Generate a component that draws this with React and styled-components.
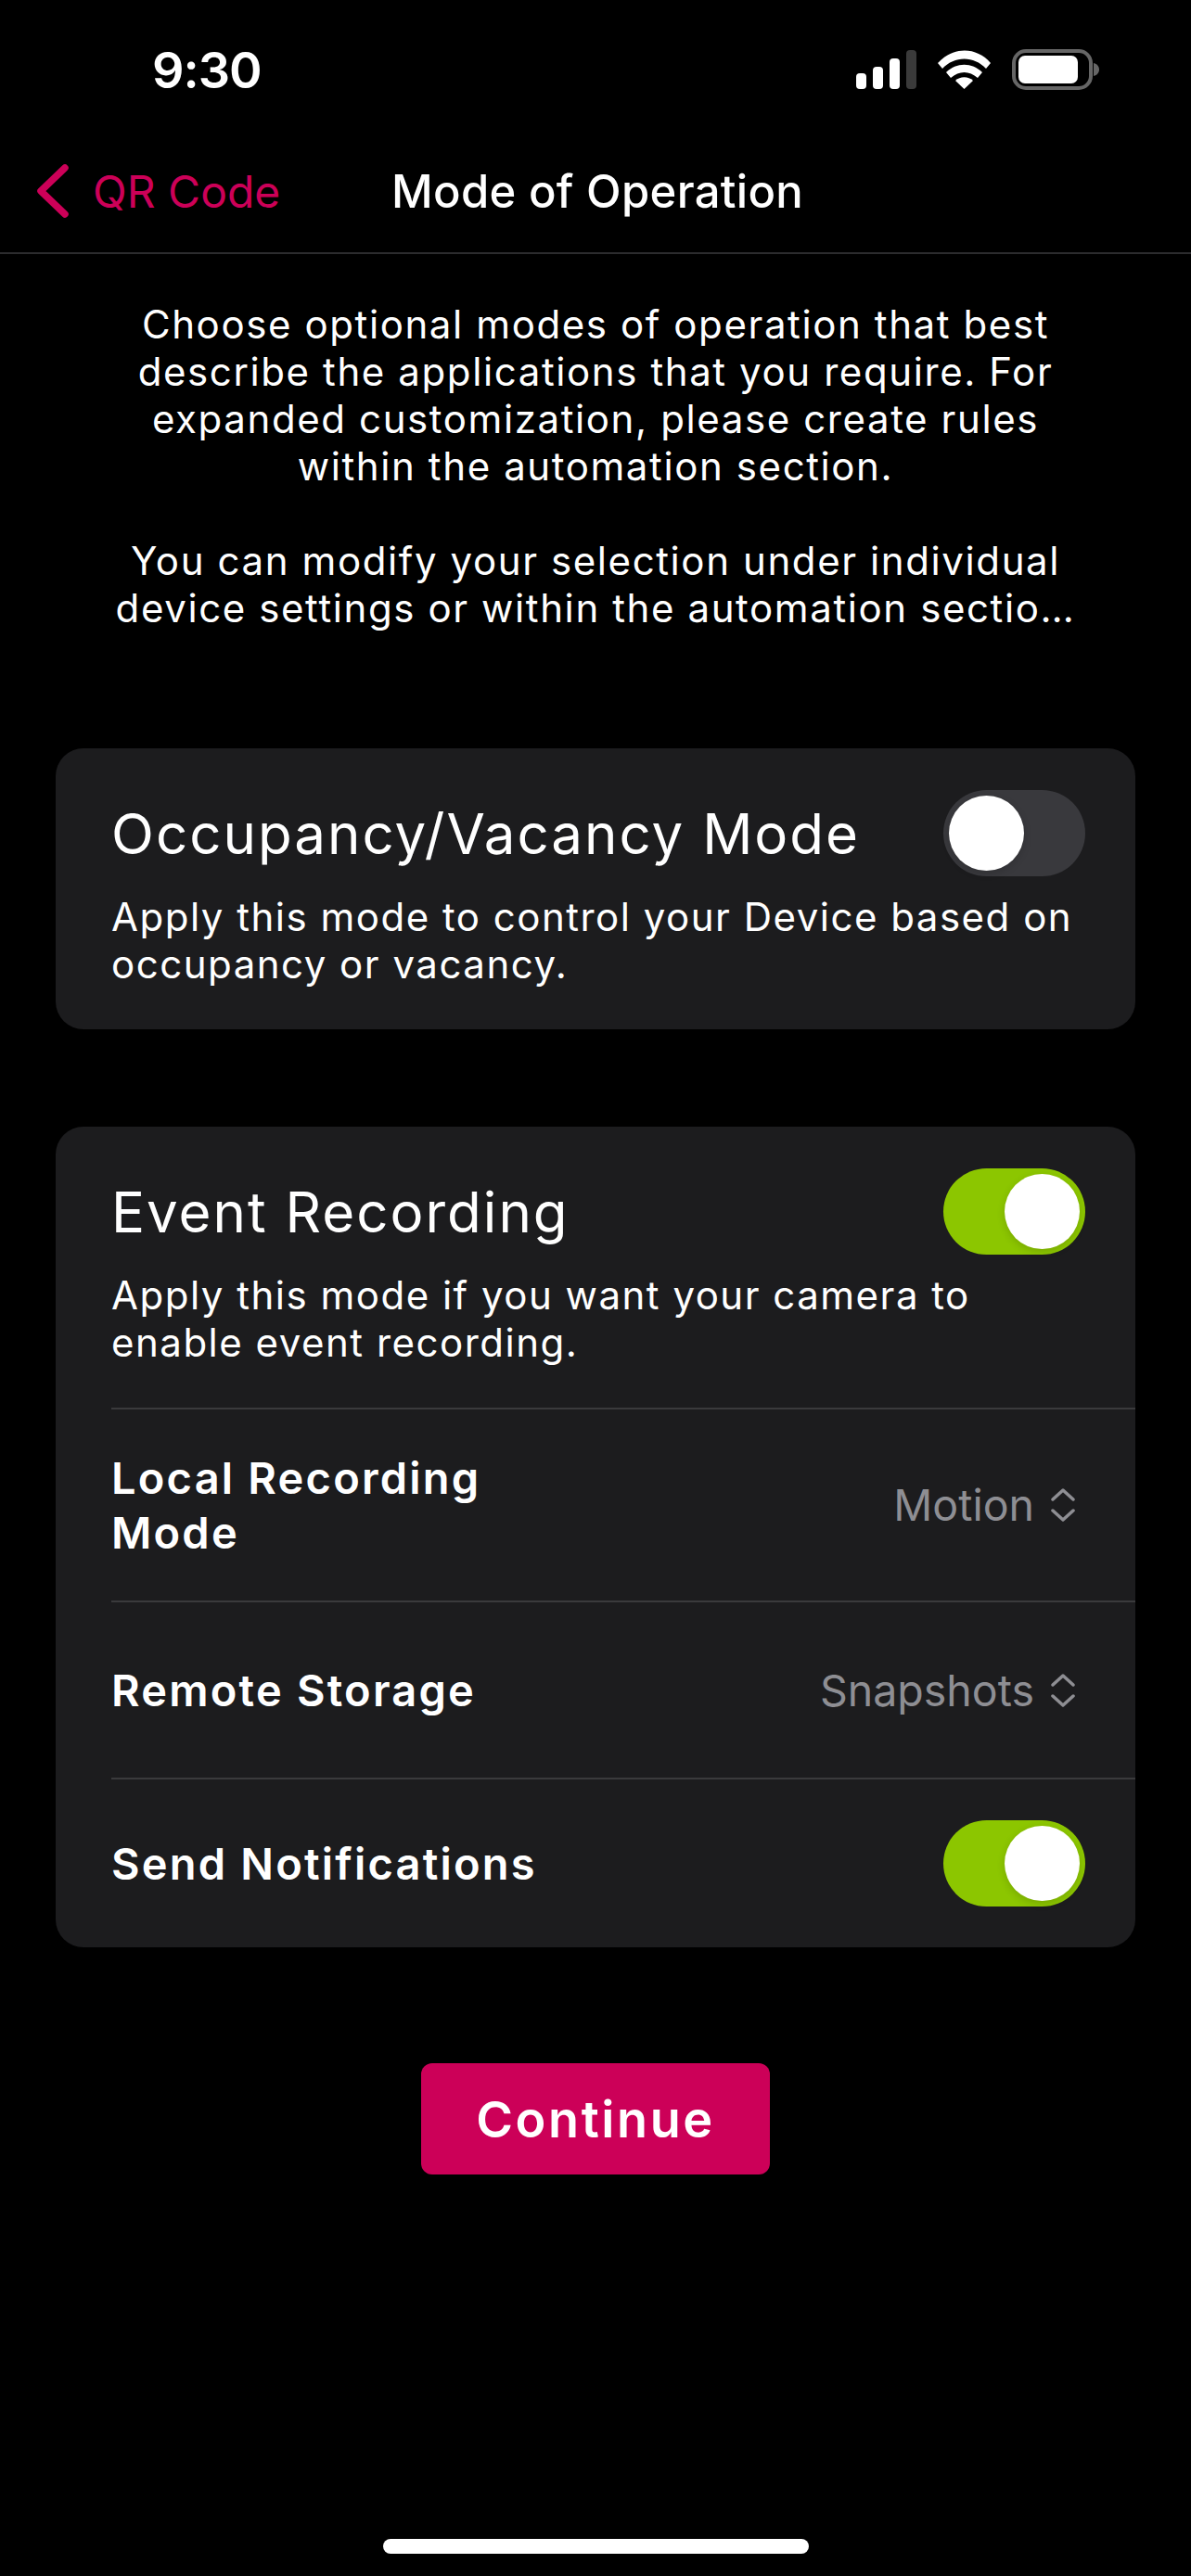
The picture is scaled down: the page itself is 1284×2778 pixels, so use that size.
import React from 'react';
import styled, { createGlobalStyle } from 'styled-components';

const GlobalStyle = createGlobalStyle`
  html, body {
    margin: 0;
    padding: 0;
    background: #000;
  }
  * {
    box-sizing: border-box;
  }
`;

const body = `Inter, "Open Sans", sans-serif`;
const pink = '#cc0058';

const Screen = styled.div`
  width: 1284px;
  height: 2778px;
  background: #000;
  color: #fff;
  font-family: ${body};
  display: flex;
  flex-direction: column;
  overflow: hidden;
`;

const StatusBar = styled.div`
  height: 146px;
  padding: 43px 98px 0 164px;
  display: flex;
  justify-content: space-between;
  align-items: flex-start;
`;

const Time = styled.div`
  font-size: 54px;
  line-height: 66px;
  font-weight: 600;
  letter-spacing: -1px;
`;

const StatusIcons = styled.div`
  display: flex;
  margin-top: 10px;
`;

const NavBar = styled.div`
  height: 128px;
  padding: 0 0 6px 40px;
  display: flex;
  align-items: center;
  border-bottom: 2px solid #2c2c2e;
`;

const BackLink = styled.div`
  width: 382px;
  display: flex;
  align-items: center;
  gap: 26px;
  color: ${pink};
  font-size: 48px;
`;

const NavTitle = styled.div`
  font-size: 49px;
  font-weight: 500;
  letter-spacing: 0.3px;
`;

const Intro = styled.div`
  margin-top: 50px;
  font-size: 42px;
  line-height: 51px;
  letter-spacing: 1.6px;
  text-align: center;
  white-space: nowrap;
`;

const IntroGap = styled.div`
  height: 51px;
`;

const Card = styled.section`
  margin: ${(p) => p.$top}px 60px 0;
  padding: 45px 0 ${(p) => p.$bottom}px 60px;
  background: #1c1c1e;
  border-radius: 30px;
`;

const Head = styled.div`
  height: 93px;
  margin-bottom: 18px;
  padding-right: 54px;
  display: flex;
  align-items: center;
  justify-content: space-between;
`;

const CardTitle = styled.h2`
  margin: 0;
  font-size: 60px;
  font-weight: 400;
  letter-spacing: 2px;
  white-space: nowrap;
`;

const CardText = styled.p`
  margin: 0;
  font-size: 42px;
  line-height: 51px;
  letter-spacing: 1.5px;
  white-space: nowrap;
`;

const Row = styled.div`
  height: ${(p) => p.$height}px;
  padding-right: ${(p) => (p.$toggle ? 54 : 65)}px;
  margin-top: ${(p) => p.$gap || 0}px;
  border-top: 2px solid #3a3a3c;
  display: flex;
  align-items: center;
  justify-content: space-between;
`;

const RowLabel = styled.div`
  font-size: 47px;
  line-height: 59px;
  font-weight: 600;
  letter-spacing: 2.2px;
  white-space: nowrap;
`;

const Value = styled.div`
  display: flex;
  align-items: center;
  gap: 18px;
  color: #8e8e93;
  font-size: 46.500px;
`;

const Track = styled.div`
  width: 153px;
  height: 93px;
  padding: 6px;
  border-radius: 47px;
  display: flex;
  justify-content: ${(p) => (p.$on ? 'flex-end' : 'flex-start')};
  background: ${(p) => (p.$on ? '#8cc600' : '#39393d')};
`;

const Thumb = styled.div`
  width: 81px;
  height: 81px;
  border-radius: 50%;
  background: #fff;
  box-shadow: 0 3px 8px rgba(0, 0, 0, 0.15);
`;

const Footer = styled.div`
  margin-top: 125px;
  display: flex;
  justify-content: center;
`;

const ContinueButton = styled.button`
  width: 376px;
  height: 120px;
  border: 0;
  border-radius: 12px;
  background: ${pink};
  color: #fff;
  font-family: ${body};
  font-size: 54px;
  font-weight: 600;
  letter-spacing: 2.6px;
`;

const HomeBar = styled.div`
  width: 459px;
  height: 16px;
  margin: 393px auto 0;
  border-radius: 8px;
  background: #fff;
`;

const StatusGlyphs = () => (
  <svg width="264" height="44" viewBox="0 0 264 44">
    <rect x="1" y="26" width="11" height="17" rx="4" fill="#fff" />
    <rect x="19" y="19" width="11" height="24" rx="4" fill="#fff" />
    <rect x="37" y="10" width="11" height="33" rx="4" fill="#fff" />
    <rect x="55" y="1" width="11" height="42" rx="4" fill="#3a3a3a" />
    <path d="M89 15 C105 -3 131 -3 146 15 L141 21 C128 7 107 7 94 21 Z" fill="#fff" />
    <path d="M98 25 C109 14 126 14 137 25 L132 31 C123 23 112 23 103 31 Z" fill="#fff" />
    <path d="M108 34 C113 29 122 29 127 34 L117.500 43 Z" fill="#fff" />
    <rect x="171" y="2" width="83" height="40" rx="13" fill="none" stroke="#666" strokeWidth="4" />
    <rect x="176" y="7" width="64" height="30" rx="7" fill="#fff" />
    <path d="M257 15 C261 16 263 19 263 22 C263 25 261 28 257 29 Z" fill="#666" />
  </svg>
);

const BackChevron = () => (
  <svg width="34" height="58" viewBox="0 0 34 58">
    <path d="M30 4 L4 29 L30 54" fill="none" stroke={pink} strokeWidth="7.500" strokeLinecap="round" strokeLinejoin="round" />
  </svg>
);

const UpDown = () => (
  <svg width="26" height="38" viewBox="0 0 26 38">
    <path d="M2 13 L13 3 L24 13 M2 25 L13 35 L24 25" fill="none" stroke="#8e8e93" strokeWidth="3.500" strokeLinecap="round" strokeLinejoin="round" />
  </svg>
);

const Toggle = ({ on }) => (
  <Track $on={on}>
    <Thumb />
  </Track>
);

export default function App() {
  return (
    <Screen>
      <GlobalStyle />
      <StatusBar>
        <Time>9:30</Time>
        <StatusIcons>
          <StatusGlyphs />
        </StatusIcons>
      </StatusBar>
      <NavBar>
        <BackLink>
          <BackChevron />
          QR Code
        </BackLink>
        <NavTitle>Mode of Operation</NavTitle>
      </NavBar>
      <Intro>
        Choose optional modes of operation that best<br />
        describe the applications that you require. For<br />
        expanded customization, please create rules<br />
        within the automation section.
        <IntroGap />
        You can modify your selection under individual<br />
        device settings or within the automation sectio…
      </Intro>
      <Card $top={126} $bottom={45}>
        <Head>
          <CardTitle>Occupancy/Vacancy Mode</CardTitle>
          <Toggle />
        </Head>
        <CardText>
          Apply this mode to control your Device based on<br />
          occupancy or vacancy.
        </CardText>
      </Card>
      <Card $top={105} $bottom={0}>
        <Head>
          <CardTitle>Event Recording</CardTitle>
          <Toggle on />
        </Head>
        <CardText>
          Apply this mode if you want your camera to<br />
          enable event recording.
        </CardText>
        <Row $height={208} $gap={45}>
          <RowLabel>Local Recording<br />Mode</RowLabel>
          <Value>Motion <UpDown /></Value>
        </Row>
        <Row $height={191}>
          <RowLabel>Remote Storage</RowLabel>
          <Value>Snapshots <UpDown /></Value>
        </Row>
        <Row $height={183} $toggle>
          <RowLabel>Send Notifications</RowLabel>
          <Toggle on />
        </Row>
      </Card>
      <Footer>
        <ContinueButton>Continue</ContinueButton>
      </Footer>
      <HomeBar />
    </Screen>
  );
}
